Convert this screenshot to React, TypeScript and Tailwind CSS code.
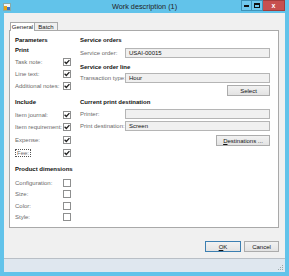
import type { ReactNode } from "react";

const font = { fontFamily: '"Liberation Sans", Arial, sans-serif' };

function Check({ on }: { on: boolean }) {
  return (
    <span className="w-[8px] h-[8px] border border-[#8e8f8f] bg-white flex items-center justify-center">
      {on && (
        <svg width="6" height="6" viewBox="0 0 6 6">
          <path d="M0.6 2.8 L2.3 4.5 L5.4 1.1" stroke="#222" strokeWidth="1.3" fill="none" />
        </svg>
      )}
    </span>
  );
}

function CheckRow({ label, on, h, focus }: { label: string; on: boolean; h: string; focus?: boolean }) {
  return (
    <div className={`flex items-center ${h}`}>
      <span className="w-[48px] text-[#6b6b6b] whitespace-nowrap">
        <span className={focus ? "border border-dotted border-[#555] px-[1px]" : ""}>{label}</span>
      </span>
      <Check on={on} />
    </div>
  );
}

function Field({ label, value }: { label: string; value: string }) {
  return (
    <div className="flex items-center h-[12px]">
      <span className="w-[45px] text-[#6b6b6b] whitespace-nowrap">{label}</span>
      <div className="flex-1 h-[10px] border border-[#b5b5b5] bg-[#f0f0f0] flex items-center px-[3px] text-[#111]">
        {value}
      </div>
    </div>
  );
}

function Btn({ children, w, primary }: { children: ReactNode; w: string; primary?: boolean }) {
  return (
    <div
      className={`${w} h-[11px] border ${
        primary ? "border-[#3c7fb1]" : "border-[#acacac]"
      } bg-gradient-to-b from-[#f2f2f2] to-[#e3e3e3] flex items-center justify-center text-[#111]`}
    >
      {children}
    </div>
  );
}

function Heading({ children, h = "h-[10px]" }: { children: ReactNode; h?: string }) {
  return <div className={`${h} flex items-center font-bold text-[#111]`}>{children}</div>;
}

export default function App() {
  return (
    <div className="w-[289px] h-[276px] bg-[#62c3ea] flex flex-col text-[6px] leading-none" style={font}>
      {/* Title bar */}
      <div className="h-[13px] grid grid-cols-[1fr_auto_1fr] items-start">
        <div className="w-[8px] h-[8px] mt-[3px] ml-[3px] bg-[#f3f3f3] border border-[#8aa] flex items-end justify-start">
          <span className="w-[4px] h-[4px] bg-[#e8a317]" />
          <span className="w-[3px] h-[3px] bg-[#3b73c4]" />
        </div>
        <div className="h-[13px] flex items-center justify-center text-[7.3px] text-[#222]">
          Work description (1)
        </div>
        <div className="flex justify-end mr-[4px]">
          <div className="w-[11px] h-[11px] border border-[#3f93b8] bg-[#70c9ee] flex items-end justify-center pb-[3px]">
            <span className="w-[5px] h-[2px] bg-[#111]" />
          </div>
          <div className="w-[11px] h-[11px] border border-l-0 border-[#3f93b8] bg-[#70c9ee] flex items-center justify-center">
            <span className="w-[6px] h-[5px] border border-t-2 border-[#111]" />
          </div>
          <div className="w-[22px] h-[11px] bg-[#c7504f] border border-l-0 border-[#a33c3b] flex items-center justify-center text-white text-[7px] font-bold">
            x
          </div>
        </div>
      </div>

      {/* Client */}
      <div className="mx-[4px] flex-1 flex flex-col bg-[#f0f0f0]">
        <div className="pt-[9px] px-[5px] pr-[6px]">
          <div className="flex h-[8px] ml-[1px] relative z-10">
            <div className="w-[25px] h-[9px] bg-white border border-b-0 border-[#a9a9a9] flex items-center justify-center text-[#222]">
              General
            </div>
            <div className="w-[23px] h-[8px] bg-[#f0f0f0] border border-l-0 border-b-0 border-[#a9a9a9] flex items-center justify-center text-[#222]">
              Batch
            </div>
          </div>
          <div className="h-[198px] bg-white border border-[#a9a9a9] flex pt-[4px] pl-[5px] pr-[8px]">
            {/* Left column */}
            <div className="w-[65px] flex flex-col">
              <Heading>Parameters</Heading>
              <Heading>Print</Heading>
              <div className="h-[1px]" />
              <CheckRow label="Task note:" on h="h-[12px]" />
              <CheckRow label="Line text:" on h="h-[12px]" />
              <CheckRow label="Additional notes:" on h="h-[12px]" />
              <div className="h-[5px]" />
              <Heading>Include</Heading>
              <div className="h-[2px]" />
              <CheckRow label="Item journal:" on h="h-[12px]" />
              <CheckRow label="Item requirement:" on h="h-[12px]" />
              <CheckRow label="Expense:" on h="h-[13px]" />
              <CheckRow label="Fee:" on h="h-[13px]" focus />
              <div className="h-[5px]" />
              <Heading>Product dimensions</Heading>
              <div className="h-[3px]" />
              <CheckRow label="Configuration:" on={false} h="h-[11.5px]" />
              <CheckRow label="Size:" on={false} h="h-[11.5px]" />
              <CheckRow label="Color:" on={false} h="h-[11.5px]" />
              <CheckRow label="Style:" on={false} h="h-[11.5px]" />
            </div>

            {/* Right column */}
            <div className="flex-1 flex flex-col">
              <Heading>Service orders</Heading>
              <div className="h-[2px]" />
              <Field label="Service order:" value="USAI-00015" />
              <div className="h-[3px]" />
              <Heading>Service order line</Heading>
              <Field label="Transaction type:" value="Hour" />
              <div className="flex justify-end mt-[1px]">
                <Btn w="w-[43px]">Select</Btn>
              </div>
              <div className="h-[1px]" />
              <Heading>Current print destination</Heading>
              <div className="h-[1px]" />
              <Field label="Printer:" value="" />
              <Field label="Print destination:" value="Screen" />
              <div className="flex justify-end mt-[3px]">
                <Btn w="w-[54px]">
                  <span>
                    <span className="underline">D</span>estinations ...
                  </span>
                </Btn>
              </div>
            </div>
          </div>
        </div>

        <div className="flex justify-end gap-[3px] pr-[6px] mt-[13px]">
          <Btn w="w-[36px]" primary>
            <span>
              <span className="underline">O</span>K
            </span>
          </Btn>
          <Btn w="w-[35px]">Cancel</Btn>
        </div>

        <div className="flex-1" />
        {/* Status bar */}
        <div className="h-[14px] border-t border-[#b9bfc6] bg-[#dfe7ef] flex items-end justify-end p-[1px]">
          <svg width="6" height="6" viewBox="0 0 6 6">
            <rect x="4" y="0" width="1" height="1" fill="#9aa" />
            <rect x="2" y="2" width="1" height="1" fill="#9aa" />
            <rect x="4" y="2" width="1" height="1" fill="#9aa" />
            <rect x="0" y="4" width="1" height="1" fill="#9aa" />
            <rect x="2" y="4" width="1" height="1" fill="#9aa" />
            <rect x="4" y="4" width="1" height="1" fill="#9aa" />
          </svg>
        </div>
      </div>
      <div className="h-[4px]" />
    </div>
  );
}
